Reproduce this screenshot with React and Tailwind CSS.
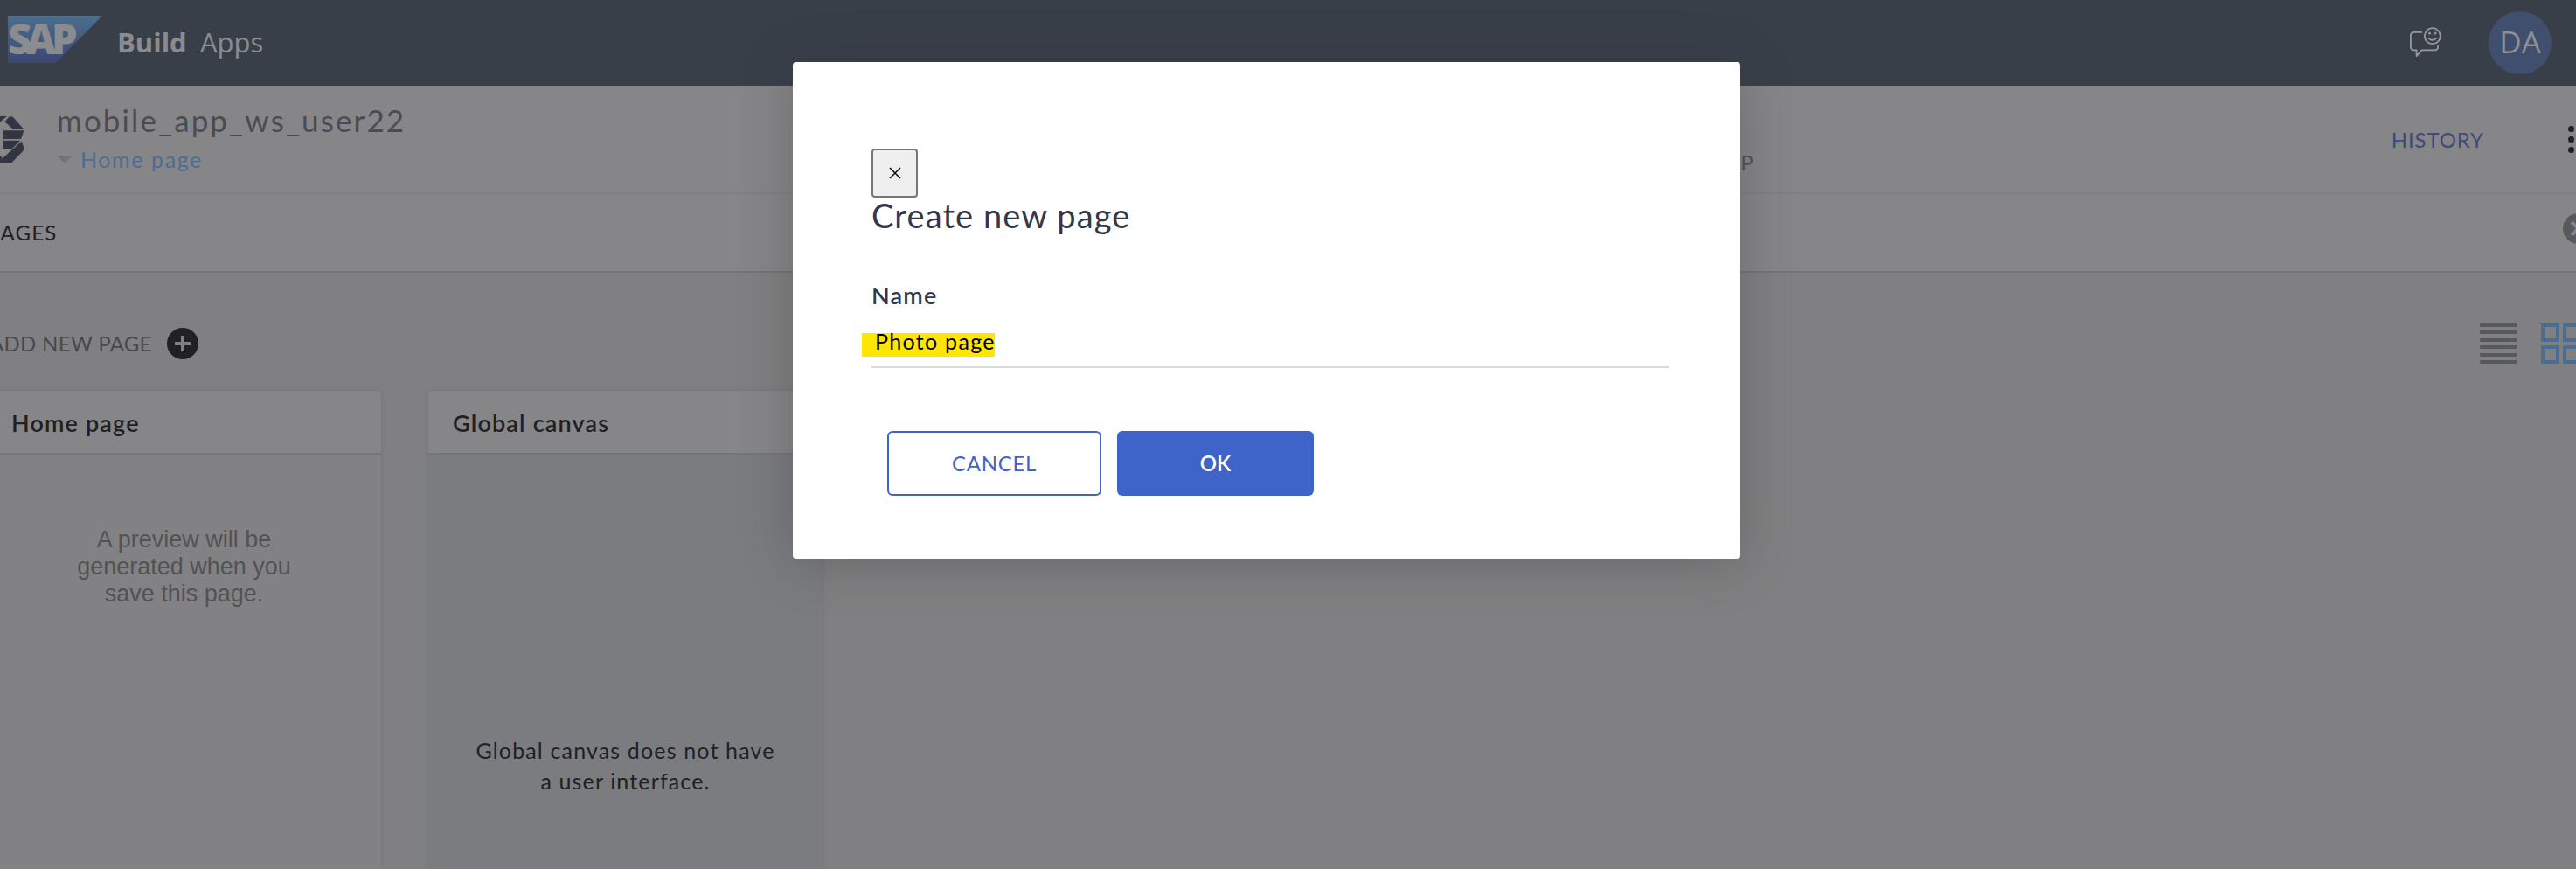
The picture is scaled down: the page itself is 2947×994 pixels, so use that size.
const lato = "font-['Lato',sans-serif]";

function SapLogo() {
  return (
    <svg width="110" height="56" viewBox="0 0 110 56" className="block shrink-0 overflow-visible">
      <defs>
        <linearGradient id="sap" x1="0" y1="0" x2="0" y2="1">
          <stop offset="0" stopColor="#4b6f8c" />
          <stop offset="0.5" stopColor="#455a81" />
          <stop offset="1" stopColor="#3c4672" />
        </linearGradient>
      </defs>
      <path d="M0 1H108L54.5 55H0Z" fill="url(#sap)" />
      <text x="0 21 50" y="44.5" fontFamily="Open Sans, sans-serif" fontWeight="800" fontSize="47" fill="#8b8c8f">SAP</text>
    </svg>
  );
}

function FeedbackIcon() {
  return (
    <svg width="38" height="36" viewBox="0 0 38 36" fill="none" stroke="#97999c" strokeWidth="1.8" strokeLinejoin="round" className="block shrink-0">
      <path d="M15 5.8H5.5a3.6 3.6 0 0 0-3.6 3.6v13.3a3.6 3.6 0 0 0 3.6 3.6H8.6v6.9L14.7 26.3H29.5a3.6 3.6 0 0 0 3.6-3.6V21" />
      <circle cx="26.8" cy="10.2" r="9" />
      <path d="M22.3 12.6q4.5 4.6 9 0" strokeLinecap="round" />
      <circle cx="23.6" cy="7.2" r="1.4" fill="#97999c" stroke="none" />
      <circle cx="30" cy="7.2" r="1.4" fill="#97999c" stroke="none" />
    </svg>
  );
}

function ProductMark() {
  return (
    <svg width="28" height="56" viewBox="0 0 28 56" fill="#333642" className="block shrink-0">
      <path d="M0 1H8L-2 9V1Z" />
      <path d="M5.5 7.2L10.5 1.6H14.5L27 15.6H14.5Z" />
      <path d="M4 17.3H27.5L24 27H4Z" />
      <path d="M4 28.8H23L14 38H4Z" />
      <path d="M24.7 29.5L28 39L13 54.5H0L-2 53.5Z" />
      <path d="M-2 44L3 49L-2 54Z" />
    </svg>
  );
}

function Square() {
  return <div className="h-[21px] w-[21px] shrink-0 border-4 border-[#4c6d92]" />;
}

function Card({ title, className, children }) {
  return (
    <div className={"w-[451px] shrink-0 overflow-hidden rounded-t-[4px] shadow-[0_0_4px_rgba(90,95,105,0.4)] " + className}>
      <div className="h-[73px] border-b-2 border-[#767678] bg-[#868688] pl-[28px]">
        <div className="text-[27px] font-semibold leading-[73px] tracking-[1.15px] text-[#212123]">{title}</div>
      </div>
      {children}
    </div>
  );
}

export default function App() {
  return (
    <div className={"relative flex h-[994px] w-[2947px] flex-col overflow-hidden bg-[#808082] whitespace-nowrap " + lato}>
      <header className="flex h-[98px] shrink-0 items-center bg-[#393f49] pl-[9px] pr-[28px]">
        <div className="-mt-[8px]"><SapLogo /></div>
        <div className="ml-[15px] flex items-baseline pb-[2px] font-['Open_Sans',sans-serif] text-[31px] leading-[96px] text-[#8b8c8f]">
          <span className="w-[95px] font-bold">Build</span>
          <span>Apps</span>
        </div>
        <div className="ml-auto flex items-center">
          <FeedbackIcon />
          <div className="ml-[53px] flex h-[72px] w-[72px] items-center justify-center rounded-full bg-[#414f6f] pb-[2px] font-['Open_Sans',sans-serif] text-[35px] text-[#8d8f93]">DA</div>
        </div>
      </header>

      <div className="flex h-[124px] shrink-0 border-b-2 border-[#818183] bg-[#868688]">
        <div className="mt-[34px]"><ProductMark /></div>
        <div className="ml-[37px] mt-[19px]">
          <div className="text-[35px] leading-[40px] tracking-[2.1px] text-[#4b4c53]">mobile_app_ws_user22</div>
          <div className="flex items-center text-[25px] leading-[50px] tracking-[1.6px] text-[#4c6d92]">
            <svg width="18" height="9" viewBox="0 0 18 9" className="mr-[9px]"><path d="M0 0H18L9 9Z" fill="#737476" /></svg>
            Home page
          </div>
        </div>
        <div className="flex flex-1 justify-end">
          <div className="mr-[730px] mt-[68px] text-[24px] leading-[40px] text-[#50525c]">SHOP</div>
          <div className="mt-[42px] text-[24px] leading-[40px] tracking-[0.9px] text-[#3e4a78]">HISTORY</div>
          <div className="ml-[96px] mr-[2px] mt-[46px] flex flex-col gap-[5px]">
            <div className="h-[7px] w-[7px] rounded-full bg-[#212123]" />
            <div className="h-[7px] w-[7px] rounded-full bg-[#212123]" />
            <div className="h-[7px] w-[7px] rounded-full bg-[#212123]" />
          </div>
        </div>
      </div>

      <div className="flex h-[90px] shrink-0 justify-between border-b-2 border-[#747476] bg-[#868688]">
        <div className="-ml-[14px] text-[24px] leading-[87px] tracking-[1.2px] text-[#212123]">PAGES</div>
        <div className="-mr-[20px] mt-[22px]">
          <svg width="35" height="35" viewBox="0 0 35 35"><circle cx="17.5" cy="17.5" r="17.5" fill="#58595f" /><path d="M10 10L25 25M25 10L10 25" stroke="#868688" strokeWidth="4" /></svg>
        </div>
      </div>

      <div className="flex h-[135px] shrink-0 justify-between">
        <div className="-ml-[12px] mt-[63px] flex h-[36px] items-center text-[24px] tracking-[0.3px] text-[#48494f]">
          <span className="w-[203px]">ADD NEW PAGE</span>
          <svg width="36" height="36" viewBox="0 0 36 36"><circle cx="18" cy="18" r="18" fill="#212123" /><path d="M18 9V27M9 18H27" stroke="#808082" strokeWidth="4" /></svg>
        </div>
        <div className="-mr-[6px] mt-[58px] flex items-start">
          <div className="flex h-[46px] w-[42px] flex-col justify-between">
            {[0, 1, 2, 3, 4, 5].map((i) => <div key={i} className="h-[4px] bg-[#58595f]" />)}
          </div>
          <div className="ml-[28px] grid grid-cols-2 gap-[4px]">
            <Square /><Square /><Square /><Square />
          </div>
        </div>
      </div>

      <div className="-ml-[15px] flex flex-1 gap-[54px]">
        <Card title="Home page" className="bg-[#828284]">
          <div className="pt-[82px] text-center font-['Liberation_Sans',sans-serif] text-[27px] leading-[31px] text-[#525254]">
            A preview will be<br />generated when you<br />save this page.
          </div>
        </Card>
        <Card title="Global canvas" className="bg-[#7b7c80]">
          <div className="pt-[321px] text-center text-[25px] leading-[35px] tracking-[1.15px] text-[#212123]">
            Global canvas does not have<br />a user interface.
          </div>
        </Card>
      </div>

      <div className="absolute left-[907px] top-[71px] h-[568px] w-[1084px] rounded-[4px] bg-white px-[90px] pt-[99px] shadow-[0_4px_60px_rgba(50,46,46,0.3)]">
        <button className="flex h-[56px] w-[53px] items-center justify-center rounded-[4px] border-2 border-[#767676] bg-[#efefef]">
          <svg width="14" height="14" viewBox="0 0 14 14" stroke="#111" strokeWidth="1.6"><path d="M1 1L13 13M13 1L1 13" /></svg>
        </button>
        <div className="-mt-[2px] text-[38px] leading-[44px] tracking-[1.1px] text-[#32374a]">Create new page</div>
        <div className="mt-[53px] text-[27px] font-semibold leading-[34px] tracking-[1.2px] text-[#32374a]">Name</div>
        <div className="-ml-[11px] mt-[26px] h-[27px] w-[152px] bg-[#ffe600] pl-[15px] text-[25px] leading-[19px] tracking-[1.3px] text-black">Photo page</div>
        <div className="mt-[11px] h-[2px] w-[912px] bg-[#d8d8de]" />
        <div className="ml-[18px] mt-[72px] flex gap-[18px] text-[24px]">
          <button className="h-[74px] w-[245px] rounded-[6px] border-2 border-[#3e64c9] pb-[1px] tracking-[0.7px] text-[#3e64c9]">CANCEL</button>
          <button className="h-[74px] w-[225px] rounded-[6px] bg-[#3e64c9] font-semibold text-white">OK</button>
        </div>
      </div>
    </div>
  );
}
